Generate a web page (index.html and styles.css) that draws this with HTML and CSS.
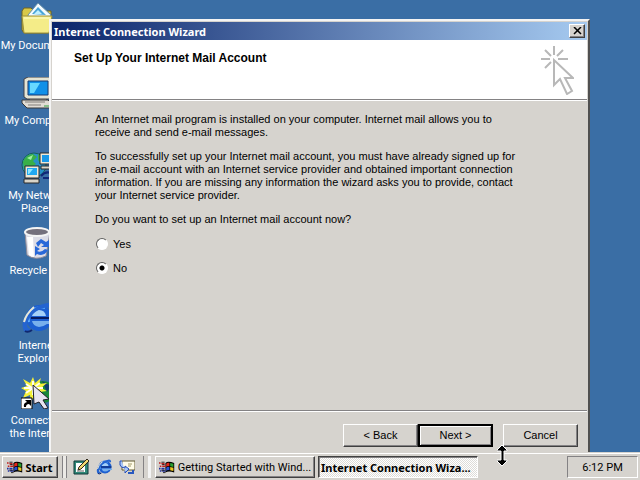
FILE: index.html
```html
<!DOCTYPE html>
<html lang="en">
<head>
    <meta charset="UTF-8">
    <meta name="viewport" content="width=device-width, initial-scale=1.0">
    <title>Internet Connection Wizard</title>
    <link rel="stylesheet" href="styles.css">
</head>
<body>

<svg class="symbols" aria-hidden="true">
    <symbol id="ie" viewBox="0 0 32 32">
        <circle cx="18" cy="16" r="13" fill="#1c5fd0"/>
        <path d="M11 14Q12 8 18 8 24 8 25 14Z" fill="#a4d0f8"/>
        <path d="M11 19H32V22H26Q22 25 18 25 12 24 11 19Z" fill="#78b0ec"/>
        <path d="M10 16H31" stroke="#081c60" stroke-width="2"/>
        <path d="M8 20Q6 12 13 7 18 4 24 6" fill="none" stroke="#60b0ff" stroke-width="2"/>
        <path d="M3 29Q-1 21 6 13 15 3 26 1 31 1 30 7 27 4 19 7 10 12 7 19 4 26 10 27 6 31 3 29Z" fill="#2464d0"/>
        <path d="M3 20Q5 12 13 5" fill="none" stroke="#e8e8d8" stroke-width="2"/>
        <path d="M4 29Q7 31 11 28" fill="none" stroke="#102870" stroke-width="2"/>
    </symbol>
    <symbol id="flag" viewBox="0 0 20 16">
        <path d="M8 3Q11 0 19 3V15Q12 12 8 15Z" fill="#000"/>
        <path d="M9 4Q11 2 13 3V7Q11 6 9 8Z" fill="#e02818"/>
        <path d="M14 3 18 4V8L14 7Z" fill="#28a030"/>
        <path d="M9 9Q11 7 13 8V12Q11 11 9 13Z" fill="#2850d0"/>
        <path d="M14 8 18 9V13L14 12Z" fill="#f0c820"/>
        <path d="M0 3H2M3 4H7M1 7H3M4 7H8" stroke="#c02020" stroke-width="2"/>
        <path d="M0 10H2M3 10H7M1 13H3M4 13H8" stroke="#2030a0" stroke-width="2"/>
        <path d="M3 2H7M4 5H7M3 12H7M5 15H8" stroke="#000"/>
    </symbol>
</svg>

<main class="desktop">
    <nav class="icons">
        <a href="#documents">
            <svg viewBox="0 0 32 32">
                <path d="M1 9 3 6H10L13 9H30V28L27 31H3L1 28Z" fill="#d8c848" stroke="#706420"/>
                <path d="M7 13 17 1 30 13 27 20H8Z" fill="#f4fcff" stroke="#6890a8"/>
                <path d="M11 12 17 5 25 13Z" fill="#48a4d8"/>
                <path d="M13 12 17 8 21 12Z" fill="#c0f0ff"/>
                <path d="M1 14H31L28 31H3Z" fill="#f4ec88" stroke="#9c9038"/>
                <path d="M3 16H29" stroke="#ffffd0"/>
            </svg>
            <span>My&nbsp;Documents</span>
        </a>
        <a href="#computer">
            <svg viewBox="0 0 32 32">
                <path d="M3 2 7 0H29L31 2V19L28 22H6L3 20Z" fill="#e4e4d4" stroke="#404048"/>
                <path d="M7 4H27V18H7Z" fill="#1090e8" stroke="#183870"/>
                <path d="M9 6H19L13 16H9Z" fill="#68d8ff"/>
                <path d="M9 22H25V25H9Z" fill="#88847c"/>
                <path d="M1 23H27L31 27V31H6L1 26Z" fill="#e0dcd4" stroke="#383838"/>
                <path d="M4 25H24M7 28H20" stroke="#807c78"/>
                <path d="M23 29H28" stroke="#30a040"/>
            </svg>
            <span>My Computer</span>
        </a>
        <a href="#network">
            <svg viewBox="0 0 32 32">
                <circle cx="13" cy="13" r="12" fill="#2890c8" stroke="#186058"/>
                <path d="M2 10Q5 2 12 2L16 5 12 9 15 12 9 16 6 13 3 18ZM17 2 24 7 20 12 17 8Z" fill="#38b048"/>
                <path d="M6 6 12 3 10 8Z" fill="#a0f0a0"/>
                <path d="M19 1H32V12H19Z" fill="#ece8d8" stroke="#282828"/>
                <path d="M21 3H31V10H21Z" fill="#1898e8"/>
                <path d="M20 14H32V17H20Z" fill="#d8d4c8" stroke="#282828"/>
                <path d="M4 14H18V26H4Z" fill="#ece8d8" stroke="#282828"/>
                <path d="M6 16H16V23H6Z" fill="#20a8f0"/>
                <path d="M7 17H12L8 22H7Z" fill="#90e8ff"/>
                <path d="M3 27H18V31H3Z" fill="#d8d4c8" stroke="#282828"/>
                <path d="M20 24Q25 18 32 22M22 26H32" fill="none" stroke="#102878" stroke-width="2"/>
            </svg>
            <span>My Network Places</span>
        </a>
        <a href="#recycle">
            <svg viewBox="0 0 32 32">
                <path d="M4 5 6 28Q14 34 25 29L29 5Z" fill="#dcdce6" stroke="#908c98"/>
                <path d="M6 10 8 28Q10 30 13 30L12 10Z" fill="#fff"/>
                <ellipse cx="16" cy="5" rx="12" ry="4" fill="#74707c" stroke="#f4f4f4" stroke-width="2"/>
                <path d="M15 16 20 12 25 15 28 13V20H20L23 18 20 16 17 20ZM14 19 19 22 16 24Q20 26 24 22L27 23Q23 30 16 27L14 29Z" fill="#2868d8"/>
            </svg>
            <span>Recycle Bin</span>
        </a>
        <a href="#explorer">
            <svg><use href="#ie"/></svg>
            <span>Internet Explorer</span>
        </a>
        <a href="#connect">
            <svg viewBox="0 0 32 32">
                <circle cx="22" cy="15" r="11" fill="#188838"/>
                <path d="M21 4 30 9 26 15Z" fill="#103c70"/>
                <path d="M12 0 14 6 20 1 18 7 26 6 20 11 26 14 19 15 21 22 14 18 10 25 9 18 2 21 5 14 0 11 6 9 2 2 9 6Z" fill="#f4f038"/>
                <path d="M12 4V18M5 7 19 16M19 6 5 16M3 11H22" stroke="#fffff0" stroke-width="2"/>
                <path d="M12 8 28 22 22 23 27 31 23 32 18 25 13 27Z" fill="#e8e4f0" stroke="#202028"/>
                <path d="M0 21H11V32H0Z" fill="#fff" stroke="#000"/>
                <path d="M3 30Q2 26 6 25L4 23H10V29L8 27Q5 27 5 30Z" fill="#000"/>
            </svg>
            <span>Connect to the Internet</span>
        </a>
    </nav>

    <section class="window">
        <div class="titlebar">
            <span>Internet Connection Wizard</span>
            <button type="button" class="close" aria-label="Close">
                <svg viewBox="0 0 9 8"><path d="M1 0 8 7M8 0 1 7" stroke="#000" stroke-width="1.5"/></svg>
            </button>
        </div>
        <header class="heading">
            <h1>Set Up Your Internet Mail Account</h1>
            <svg viewBox="0 0 34 50">
                <path d="M14 1V10M1 14H10M18 14H28M5 5 11 11M23 5 17 11M5 23 11 17M14 15V40L20 34 27 49 32 46 25 33H33Z" fill="none" stroke="#b8b8b8" stroke-width="2"/>
            </svg>
        </header>
        <form class="content">
            <p>An Internet mail program is installed on your computer. Internet mail allows you to receive and send e-mail messages.</p>
            <p>To successfully set up your Internet mail account, you must have already signed up for an e-mail account with an Internet service provider and obtained important connection information. If you are missing any information the wizard asks you to provide, contact your Internet service provider.</p>
            <p>Do you want to set up an Internet mail account now?</p>
            <label><input type="radio" name="setup" value="yes">Yes</label>
            <label><input type="radio" name="setup" value="no" checked>No</label>
        </form>
        <footer class="actions">
            <div class="steps">
                <button type="button">&lt; Back</button>
                <button type="button" class="default">Next &gt;</button>
            </div>
            <button type="button">Cancel</button>
        </footer>
    </section>
</main>

<footer class="taskbar">
    <button type="button" class="start"><svg><use href="#flag"/></svg>Start</button>
    <div class="quick">
        <a href="#desktop" aria-label="Show Desktop">
            <svg viewBox="0 0 16 16">
                <path d="M1 2H15V15H1Z" fill="#308878" stroke="#103838"/>
                <path d="M3 4H12V13H3Z" fill="#fff"/>
                <path d="M14 0 16 2 8 10 5 11 6 8Z" fill="#f0d870" stroke="#302818"/>
                <path d="M4 12H11" stroke="#606060"/>
            </svg>
        </a>
        <a href="#explorer" aria-label="Internet Explorer"><svg><use href="#ie"/></svg></a>
        <a href="#mail" aria-label="Outlook Express">
            <svg viewBox="0 0 16 16">
                <path d="M3 2H16V11H3Z" fill="#fffce8" stroke="#605830"/>
                <path d="M9 5H13M9 7H12" stroke="#a09868"/>
                <path d="M3 2H1V6Q2 9 6 9V7L10 10 6 14V12" fill="#a8c8f8" stroke="#2850b8"/>
                <path d="M14 11V14H9" fill="none" stroke="#2858c0" stroke-width="2"/>
            </svg>
        </a>
    </div>
    <div class="tasks">
        <button type="button"><svg><use href="#flag"/></svg><span>Getting Started with Wind...</span></button>
        <button type="button" class="active"><span>Internet Connection Wiza...</span></button>
    </div>
    <time class="clock">6:12 PM</time>
</footer>

<svg class="cursor" viewBox="0 0 11 21">
    <path d="M5 0 10 5V6H7V15H10V16L5 21 0 16V15H4V6H0V5Z" fill="#000" stroke="#fff"/>
</svg>

</body>
</html>
```
FILE: styles.css
```css
* {
    box-sizing: border-box;
}
body {
    margin: 0;
    height: 100vh;
    display: flex;
    flex-direction: column;
    overflow: hidden;
    background-color: #3A6EA5;
    font-family: Roboto, Arial, sans-serif;
    font-size: 11px;
    line-height: 13px;
    color: #000;
}
svg {
    display: block;
    flex: none;
}
.symbols {
    position: absolute;
    width: 0;
    height: 0;
}
button {
    display: flex;
    align-items: center;
    justify-content: center;
    padding: 0;
    font: inherit;
    color: #000;
    background-color: #D6D3CE;
    border: 1px solid;
    border-color: #FFF #404040 #404040 #FFF;
    box-shadow: inset -1px -1px #848284;
}
.desktop {
    position: relative;
    flex: 1;
    min-height: 0;
}
.icons {
    width: 75px;
    display: grid;
    grid-template-columns: minmax(0, 1fr);
    grid-auto-rows: 75px;
    padding-top: 2px;
}
.icons a {
    display: flex;
    flex-direction: column;
    align-items: center;
    gap: 5px;
    padding: 0 2px;
    color: white;
    text-align: center;
    text-decoration: none;
}
.icons svg {
    width: 32px;
    height: 32px;
    margin-right: 2px;
}

/* wizard window */
.window {
    position: absolute;
    top: 19px;
    left: 49px;
    right: 50px;
    bottom: 0;
    display: flex;
    flex-direction: column;
    background-color: #D6D3CE;
    border: 2px solid;
    border-color: #F4F4F4 #505050 #D6D3CE #F4F4F4;
    border-bottom: 0;
    padding: 1px 1px 0;
    font-family: "Liberation Sans", Arial, sans-serif;
}
.titlebar {
    display: flex;
    align-items: center;
    justify-content: space-between;
    height: 18px;
    padding: 0 2px;
    background: linear-gradient(to right, #0A246A, #A6CAF0);
    color: white;
    font-family: "Noto Sans", sans-serif;
    font-weight: bold;
}
.close {
    width: 16px;
    height: 14px;
}
.close svg {
    width: 9px;
    height: 8px;
}
.heading {
    display: flex;
    justify-content: space-between;
    height: 60px;
    padding: 5px 13px 0 22px;
    background-color: white;
    border-bottom: 1px solid #848284;
}
.heading h1 {
    margin: 6px 0 0;
    font-size: 12px;
    line-height: 14px;
}
.heading svg {
    width: 34px;
    height: 50px;
}
.content {
    flex: 1;
    padding: 12px 62px 0 43px;
    border-top: 1px solid white;
}
.content p {
    margin: 0 0 11px;
}
.content label {
    display: flex;
    align-items: center;
    gap: 5px;
    width: 100px;
    height: 14px;
    margin: 10px 0;
}
.content input {
    appearance: none;
    width: 12px;
    height: 12px;
    margin: 0 0 0 1px;
    border: 1px solid;
    border-color: #606060 #FFF #FFF #606060;
    border-radius: 50%;
    background-color: white;
}
.content input:checked {
    background-image: radial-gradient(circle, #000 2px, transparent 3px);
}
.actions {
    display: flex;
    justify-content: flex-end;
    gap: 10px;
    height: 42px;
    padding: 13px 9px 5px;
    border-top: 1px solid #848284;
    box-shadow: inset 0 1px white;
}
.actions button {
    width: 75px;
}
.steps {
    display: flex;
}
.actions .default {
    border: 2px solid black;
    box-shadow: inset 1px 1px #FFF, inset -1px -1px #848284;
}

/* taskbar */
.taskbar {
    display: flex;
    position: relative;
    height: 28px;
    padding: 3px 2px 2px;
    background-color: #D6D3CE;
    border-top: 1px solid #D6D3CE;
    box-shadow: inset 0 1px white;
}
.taskbar .start {
    width: 56px;
    gap: 2px;
    font-family: "Noto Sans", sans-serif;
    font-weight: bold;
}
.start svg,
.tasks svg {
    width: 16px;
    height: 14px;
}
.quick {
    display: flex;
    align-items: center;
    gap: 7px;
    margin: 0 4px;
    padding: 0 8px 0 10px;
    border-left: 1px solid #848284;
    border-right: 1px solid #848284;
    box-shadow: inset 3px 0 #ECEAE6, inset 4px 0 #848284;
}
.quick svg {
    width: 16px;
    height: 16px;
}
.tasks {
    display: flex;
    flex: 1;
    gap: 3px;
    padding-left: 4px;
    border-left: 3px outset #F4F4F4;
}
.tasks button {
    width: 160px;
    gap: 3px;
    white-space: nowrap;
}
.tasks .active {
    justify-content: flex-start;
    padding-left: 2px;
    border-color: #404040 #FFF #FFF #404040;
    box-shadow: inset 1px 1px #848284;
    background: repeating-conic-gradient(#FFF 0 25%, #DEDCD8 0 50%) 0 0 / 2px 2px;
    font-family: "Noto Sans", sans-serif;
    font-weight: bold;
}
.clock {
    width: 71px;
    display: flex;
    align-items: center;
    justify-content: center;
    border: 1px solid;
    border-color: #848284 #FFF #FFF #848284;
}
.cursor {
    position: absolute;
    left: 497px;
    top: 445px;
    width: 11px;
    height: 21px;
}
```
